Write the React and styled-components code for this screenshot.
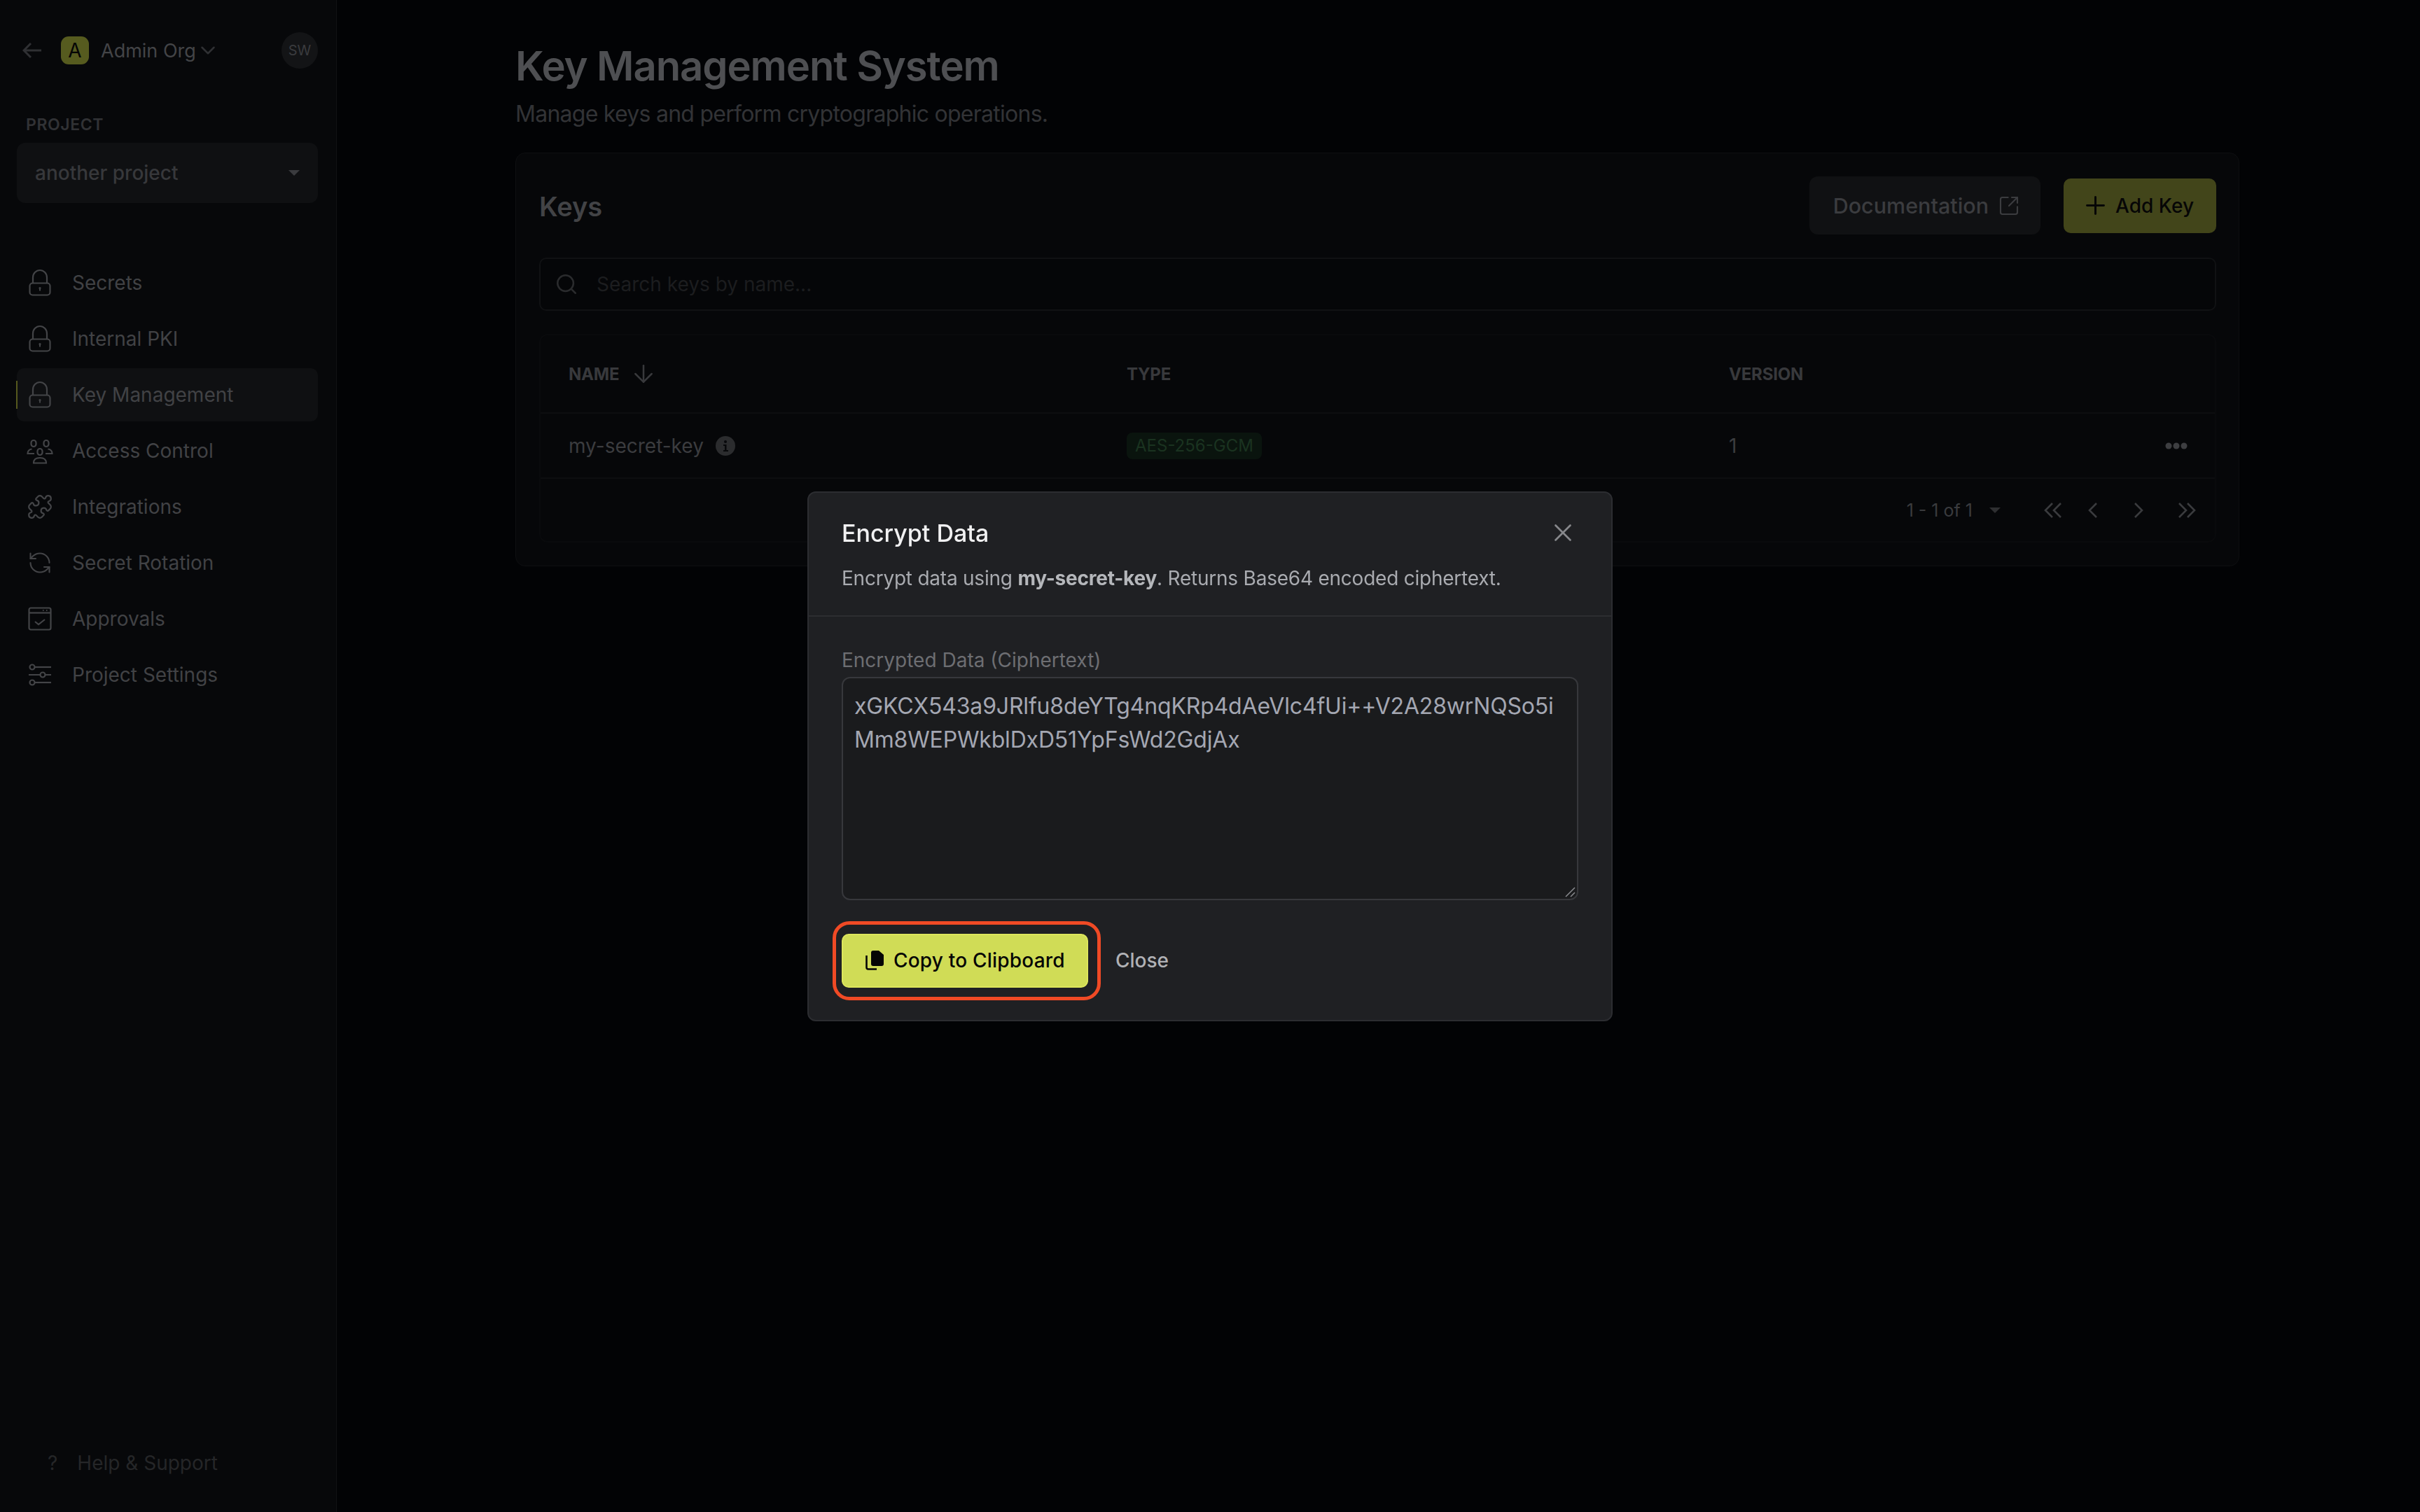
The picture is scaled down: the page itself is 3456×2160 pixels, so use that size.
import React from "react";
import styled, { createGlobalStyle } from "styled-components";
import { ArrowDown, ChevronDown, Plus, Puzzle, RefreshCcw, Search, SquareArrowOutUpRight, X } from "lucide-react";

const GlobalStyle = createGlobalStyle`
  html, body {
    margin: 0;
    padding: 0;
    background: #020305;
  }
  body {
    font-family: Inter, "Liberation Sans", sans-serif;
    -webkit-font-smoothing: antialiased;
  }
  * { box-sizing: border-box; }
`;

const Page = styled.div`
  display: grid;
  grid-template-columns: 481px 1fr;
  width: 3456px;
  height: 2160px;
  overflow: hidden;
`;

const Sidebar = styled.aside`
  display: flex;
  flex-direction: column;
  background: #07080a;
  border-right: 1px solid #111214;
  padding: 46px 26px 50px 24px;
`;

const SideHeader = styled.div`
  display: flex;
  align-items: center;
  height: 52px;
  padding-left: 8px;
  color: #2f3033;
`;

const OrgBadge = styled.div`
  display: flex;
  align-items: center;
  justify-content: center;
  width: 40px;
  height: 40px;
  margin-left: 27px;
  border-radius: 11px;
  background: #565b1f;
  color: #050505;
  font-size: 28px;
`;

const OrgName = styled.span`
  margin-left: 17px;
  font-size: 27px;
  color: #434447;
`;

const Avatar = styled.div`
  display: flex;
  align-items: center;
  justify-content: center;
  width: 52px;
  height: 52px;
  margin-left: auto;
  border-radius: 50%;
  background: #131416;
  color: #3a3b3e;
  font-size: 20px;
`;

const ProjectLabel = styled.div`
  margin: 65px 0 11px 13px;
  font-size: 23px;
  line-height: 30px;
  font-weight: 600;
  letter-spacing: 0.6px;
  color: #313235;
`;

const ProjectSelect = styled.div`
  display: flex;
  align-items: center;
  justify-content: space-between;
  height: 86px;
  padding: 0 26px;
  border-radius: 12px;
  background: #0f1012;
  font-size: 28px;
  font-weight: 500;
  color: #37383b;
`;

const Caret = styled.span`
  display: block;
  width: 0;
  height: 0;
  border-left: ${(p) => p.$size}px solid transparent;
  border-right: ${(p) => p.$size}px solid transparent;
  border-top: ${(p) => p.$size}px solid ${(p) => p.$color};
`;

const Nav = styled.nav`
  display: flex;
  flex-direction: column;
  gap: 4px;
  margin-top: 76px;
`;

const NavItem = styled.div`
  position: relative;
  display: flex;
  align-items: center;
  gap: 26px;
  height: 76px;
  padding-left: 13px;
  border-radius: 10px;
  font-size: 28px;
  color: #414245;
  background: ${(p) => (p.$active ? "#0f1012" : "transparent")};

  &::before {
    content: "";
    display: ${(p) => (p.$active ? "block" : "none")};
    position: absolute;
    left: -1px;
    top: 18px;
    width: 2px;
    height: 40px;
    background: #55591e;
  }
`;

const NavIconBox = styled.span`
  display: flex;
  align-items: center;
  justify-content: center;
  width: 40px;
  height: 40px;
  color: #434447;
`;

const HelpLink = styled.div`
  display: flex;
  align-items: center;
  gap: 28px;
  margin-top: auto;
  padding-left: 44px;
  font-size: 28px;
  line-height: 40px;
  color: #252628;
`;

const Main = styled.main`
  padding: 58px 0 0 255px;
`;

const Title = styled.h1`
  margin: 0;
  font-size: 58px;
  line-height: 72px;
  font-weight: 600;
  letter-spacing: -1.1px;
  color: #4e4f52;
`;

const Subtitle = styled.p`
  margin: 9px 0 31px;
  font-size: 32px;
  line-height: 48px;
  letter-spacing: -0.74px;
  color: #323336;
`;

const Card = styled.section`
  width: 2462px;
  padding: 33px 32px 33px 33px;
  border: 1px solid #0e0f11;
  border-radius: 14px;
  background: #060709;
`;

const CardHeader = styled.div`
  display: flex;
  align-items: center;
  height: 83px;
`;

const CardTitle = styled.h2`
  margin: 2px auto 0 0;
  font-size: 38px;
  font-weight: 600;
  color: #424346;
`;

const DocButton = styled.div`
  display: flex;
  align-items: center;
  gap: 13px;
  height: 83px;
  padding: 0 29px 0 34px;
  border-radius: 12px;
  background: #101113;
  font-size: 30.5px;
  font-weight: 500;
  color: #3b3c3f;
`;

const AddButton = styled.div`
  display: flex;
  align-items: center;
  gap: 8px;
  height: 78px;
  margin-left: 33px;
  padding: 0 32px 0 25px;
  border-radius: 10px;
  background: #42451a;
  font-size: 28px;
  font-weight: 500;
  color: #060606;
`;

const SearchBar = styled.div`
  display: flex;
  align-items: center;
  gap: 26px;
  height: 76px;
  margin-top: 33px;
  padding-left: 20px;
  border: 2px solid #101113;
  border-radius: 10px;
  background: #050608;
  font-size: 28px;
  color: #1c1d1f;
`;

const Table = styled.div`
  margin-top: 33px;
  border: 2px solid #090a0c;
  border-radius: 12px;
`;

const TableRow = styled.div`
  display: grid;
  grid-template-columns: 797px 860px 1fr 71px;
  align-items: center;
  height: ${(p) => p.$height}px;
  padding-left: 40px;
  border-bottom: 2px solid #0d0e10;
`;

const HeadCell = styled.div`
  display: flex;
  align-items: center;
  gap: 15px;
  font-size: 24px;
  font-weight: 700;
  letter-spacing: -0.2px;
  color: #38393c;
`;

const Cell = styled.div`
  display: flex;
  align-items: center;
  gap: 17px;
  font-size: 28px;
  color: #3b3c3f;
`;

const TypeBadge = styled.span`
  display: inline-flex;
  align-items: center;
  height: 38px;
  padding: 0 12px;
  border-radius: 8px;
  background: #0a140e;
  font-size: 24px;
  color: #1a3320;
`;

const TableFooter = styled.div`
  display: flex;
  align-items: center;
  justify-content: flex-end;
  height: 89px;
  padding-right: 27px;
  font-size: 25px;
  color: #3a3b3e;
`;

const PageCount = styled.span`
  margin-right: 24px;
`;

const PageArrows = styled.div`
  display: flex;
  align-items: center;
  margin-left: 62px;
  color: #3a3b3e;
`;

const PageArrow = styled.svg`
  margin-left: ${(p) => p.$gap}px;
`;

const Overlay = styled.div`
  position: fixed;
  inset: 0;
  display: flex;
  align-items: center;
  justify-content: center;
`;

const Modal = styled.div`
  width: 1150px;
  height: 757px;
  border: 2px solid #2c2d31;
  border-radius: 12px;
  background: #1f2023;
`;

const ModalHeader = styled.div`
  position: relative;
  height: 177px;
  padding: 36px 47px 0;
  border-bottom: 2px solid #2c2d31;
`;

const ModalTitle = styled.h3`
  margin: 0;
  font-size: 34px;
  line-height: 44px;
  font-weight: 500;
  color: #f1f1f2;
`;

const CloseIcon = styled.span`
  position: absolute;
  right: 48px;
  top: 36px;
  display: flex;
  color: #87888c;
`;

const ModalText = styled.p`
  margin: 22px 0 0;
  font-size: 28px;
  line-height: 40px;
  letter-spacing: -0.23px;
  color: #a9abb0;

  b {
    font-weight: 700;
    color: #b5b7bb;
  }
`;

const ModalBody = styled.div`
  padding: 44px 47px 0;
`;

const FieldLabel = styled.label`
  display: block;
  font-size: 28px;
  line-height: 36px;
  color: #6d6e72;
`;

const Ciphertext = styled.div`
  position: relative;
  height: 319px;
  margin-top: 6px;
  padding: 16px 16px;
  border: 2px solid #37383c;
  border-radius: 12px;
  background: #1a1b1d;
  font-size: 32px;
  line-height: 48px;
  letter-spacing: -0.17px;
  color: #a4a7b2;
  word-break: break-all;
`;

const ResizeGrip = styled.svg`
  position: absolute;
  right: 2px;
  bottom: 2px;
`;

const ModalActions = styled.div`
  display: flex;
  align-items: center;
  margin-top: 48px;
`;

const CopyButton = styled.div`
  position: relative;
  display: flex;
  align-items: center;
  gap: 14px;
  width: 352px;
  height: 77px;
  padding-left: 32px;
  border: 2px solid #dde65c;
  border-radius: 10px;
  background: #d0dc56;
  font-size: 28px;
  font-weight: 500;
  letter-spacing: 0.2px;
  color: #050505;

  /* the red ring is drawn on top of the screenshot */
  &::after {
    content: "";
    position: absolute;
    inset: -20px -20px -20px -15px;
    border: 5px solid #f04a25;
    border-radius: 24px;
  }
`;

const CloseButton = styled.span`
  margin-left: 39px;
  font-size: 28px;
  font-weight: 500;
  color: #b0b1b5;
`;

const BackArrow = () => (
  <svg width="28" height="24" viewBox="0 0 28 24" fill="none" stroke="currentColor" strokeWidth="3">
    <path d="M27 12H2M12 2L2 12l10 10" />
  </svg>
);

const LockIcon = () => (
  <svg width="40" height="40" viewBox="0 0 40 40" fill="none" stroke="currentColor" strokeWidth="2.2">
    <rect x="5.5" y="20.5" width="29" height="17" rx="4" />
    <path d="M10 20.5v-8a10 10.5 0 0 1 20 0v8" />
    <circle cx="20" cy="27.5" r="1.6" fill="currentColor" stroke="none" />
    <path d="M20 27.5v4" strokeWidth="2" />
  </svg>
);

const GroupIcon = () => (
  <svg width="40" height="40" viewBox="0 0 40 40" fill="none" stroke="currentColor" strokeWidth="2.2">
    <rect x="7.5" y="5" width="7" height="9" rx="3.5" />
    <rect x="25.5" y="5" width="7" height="9" rx="3.5" />
    <rect x="16.5" y="17" width="7" height="9" rx="3.5" />
    <path d="M12 24H2.5c0-4 2.5-6 6-6.5" />
    <path d="M28 24h9.5c0-4-2.5-6-6-6.5" />
    <path d="M11 37.5c0-5 3-7.5 9-7.5s9 2.5 9 7.5z" />
  </svg>
);

const ApprovalIcon = () => (
  <svg width="40" height="40" viewBox="0 0 40 40" fill="none" stroke="currentColor" strokeWidth="2.2">
    <rect x="4.5" y="4.5" width="31" height="31" rx="2.5" />
    <path d="M4.5 11.5h31" />
    <path d="M24 8h1.5M29 8h1.5" />
    <path d="M13 24l5 4 9-7" />
  </svg>
);

const SlidersIcon = () => (
  <svg width="40" height="40" viewBox="0 0 40 40" fill="none" stroke="currentColor" strokeWidth="2.2">
    <circle cx="9" cy="9" r="3.5" />
    <path d="M13 9h23" />
    <circle cx="24" cy="20" r="3.5" />
    <path d="M4 20h16M28 20h8" />
    <circle cx="9" cy="31" r="3.5" />
    <path d="M13 31h23" />
  </svg>
);

const InfoDot = () => (
  <svg width="28" height="28" viewBox="0 0 28 28">
    <circle cx="14" cy="14" r="14" fill="#2b2c2e" />
    <circle cx="14" cy="8" r="2" fill="#07080a" />
    <path d="M11 12h4.5v8H18v2h-7v-2h2v-6h-2z" fill="#07080a" />
  </svg>
);

const CopyIcon = () => (
  <svg width="26" height="28" viewBox="0 0 26 28">
    <path d="M11 0h8l7 6v13a3 3 0 0 1-3 3H11a3 3 0 0 1-3-3V3a3 3 0 0 1 3-3z" fill="#050505" />
    <path d="M1.500 7v17a2.500 2.500 0 0 0 2.500 2.500h12" fill="none" stroke="#050505" strokeWidth="2.600" />
  </svg>
);

const DotsIcon = () => (
  <svg width="32" height="10" viewBox="0 0 32 10" fill="#3d3e41">
    <circle cx="5" cy="5" r="4.5" />
    <circle cx="16" cy="5" r="4.5" />
    <circle cx="27" cy="5" r="4.5" />
  </svg>
);

const pageArrows = [
  { width: 26, gap: 0, d: "M12 1L2 11l10 10M24 1L14 11l10 10" },
  { width: 13, gap: 37, d: "M12 1L2 11l10 10" },
  { width: 13, gap: 53, d: "M1 1l10 10L1 21" },
  { width: 26, gap: 49, d: "M2 1l10 10L2 21M14 1l10 10-10 10" },
];

const navItems = [
  { label: "Secrets", icon: <LockIcon /> },
  { label: "Internal PKI", icon: <LockIcon /> },
  { label: "Key Management", icon: <LockIcon />, active: true },
  { label: "Access Control", icon: <GroupIcon /> },
  { label: "Integrations", icon: <Puzzle size={38} strokeWidth={1.4} /> },
  { label: "Secret Rotation", icon: <RefreshCcw size={36} strokeWidth={1.4} /> },
  { label: "Approvals", icon: <ApprovalIcon /> },
  { label: "Project Settings", icon: <SlidersIcon /> },
];

export default function App() {
  return (
    <>
      <GlobalStyle />
      <Page>
        <Sidebar>
          <SideHeader>
            <BackArrow />
            <OrgBadge>A</OrgBadge>
            <OrgName>Admin Org</OrgName>
            <ChevronDown size={34} strokeWidth={1.8} />
            <Avatar>SW</Avatar>
          </SideHeader>

          <ProjectLabel>PROJECT</ProjectLabel>
          <ProjectSelect>
            another project
            <Caret $size={8} $color="#3a3b3e" />
          </ProjectSelect>

          <Nav>
            {navItems.map((item) => (
              <NavItem key={item.label} $active={item.active}>
                <NavIconBox>{item.icon}</NavIconBox>
                {item.label}
              </NavItem>
            ))}
          </Nav>

          <HelpLink>
            <span>?</span>
            Help &amp; Support
          </HelpLink>
        </Sidebar>

        <Main>
          <Title>Key Management System</Title>
          <Subtitle>Manage keys and perform cryptographic operations.</Subtitle>

          <Card>
            <CardHeader>
              <CardTitle>Keys</CardTitle>
              <DocButton>
                Documentation
                <SquareArrowOutUpRight size={32} strokeWidth={1.6} />
              </DocButton>
              <AddButton>
                <Plus size={41} strokeWidth={1.75} />
                Add Key
              </AddButton>
            </CardHeader>

            <SearchBar>
              <Search size={34} strokeWidth={1.8} color="#2a2b2d" />
              Search keys by name...
            </SearchBar>

            <Table>
              <TableRow $height={112}>
                <HeadCell>
                  NAME
                  <ArrowDown size={40} strokeWidth={1.5} />
                </HeadCell>
                <HeadCell>TYPE</HeadCell>
                <HeadCell>VERSION</HeadCell>
              </TableRow>
              <TableRow $height={93}>
                <Cell>
                  my-secret-key
                  <InfoDot />
                </Cell>
                <Cell>
                  <TypeBadge>AES-256-GCM</TypeBadge>
                </Cell>
                <Cell>1</Cell>
                <Cell>
                  <DotsIcon />
                </Cell>
              </TableRow>
              <TableFooter>
                <PageCount>1 - 1 of 1</PageCount>
                <Caret $size={8} $color="#2e2f31" />
                <PageArrows>
                  {pageArrows.map((a) => (
                    <PageArrow
                      key={a.d}
                      $gap={a.gap}
                      width={a.width}
                      height="22"
                      viewBox={`0 0 ${a.width} 22`}
                      fill="none"
                      stroke="currentColor"
                      strokeWidth="2.6"
                    >
                      <path d={a.d} />
                    </PageArrow>
                  ))}
                </PageArrows>
              </TableFooter>
            </Table>
          </Card>
        </Main>

        <Overlay>
          <Modal>
            <ModalHeader>
              <ModalTitle>Encrypt Data</ModalTitle>
              <CloseIcon>
                <X size={42} strokeWidth={1.5} />
              </CloseIcon>
              <ModalText>
                Encrypt data using <b>my-secret-key</b>. Returns Base64 encoded ciphertext.
              </ModalText>
            </ModalHeader>
            <ModalBody>
              <FieldLabel>Encrypted Data (Ciphertext)</FieldLabel>
              <Ciphertext>
                xGKCX543a9JRlfu8deYTg4nqKRp4dAeVlc4fUi++V2A28wrNQSo5iMm8WEPWkblDxD51YpFsWd2GdjAx
                <ResizeGrip width="16" height="16" viewBox="0 0 16 16" stroke="#8a8b8f" strokeWidth="1.5">
                  <path d="M2 15L15 2M9 15l6-6" />
                </ResizeGrip>
              </Ciphertext>
              <ModalActions>
                <CopyButton>
                  <CopyIcon />
                  Copy to Clipboard
                </CopyButton>
                <CloseButton>Close</CloseButton>
              </ModalActions>
            </ModalBody>
          </Modal>
        </Overlay>
      </Page>
    </>
  );
}
